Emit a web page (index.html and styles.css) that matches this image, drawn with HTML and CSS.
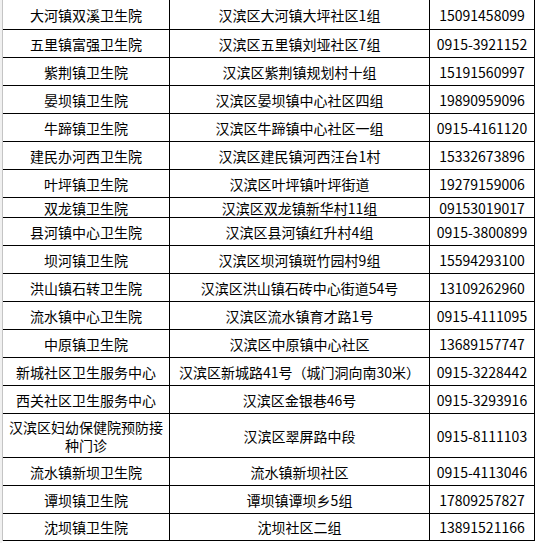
FILE: index.html
```html
<!DOCTYPE html>
<html lang="zh">
<head>
<meta charset="utf-8">
<title>卫生院联系方式</title>
<link rel="stylesheet" href="styles.css">
</head>
<body>
<div class="sheet">
  <div class="grid">
    <div class="row first"><div class="c name">大河镇双溪卫生院</div><div class="c addr">汉滨区大河镇大坪社区1组</div><div class="c tel">15091458099</div></div>
    <div class="row"><div class="c name">五里镇富强卫生院</div><div class="c addr">汉滨区五里镇刘垭社区7组</div><div class="c tel">0915-3921152</div></div>
    <div class="row"><div class="c name">紫荆镇卫生院</div><div class="c addr">汉滨区紫荆镇规划村十组</div><div class="c tel">15191560997</div></div>
    <div class="row"><div class="c name">晏坝镇卫生院</div><div class="c addr">汉滨区晏坝镇中心社区四组</div><div class="c tel">19890959096</div></div>
    <div class="row"><div class="c name">牛蹄镇卫生院</div><div class="c addr">汉滨区牛蹄镇中心社区一组</div><div class="c tel">0915-4161120</div></div>
    <div class="row"><div class="c name">建民办河西卫生院</div><div class="c addr">汉滨区建民镇河西汪台1村</div><div class="c tel">15332673896</div></div>
    <div class="row"><div class="c name">叶坪镇卫生院</div><div class="c addr">汉滨区叶坪镇叶坪街道</div><div class="c tel">19279159006</div></div>
    <div class="row short"><div class="c name">双龙镇卫生院</div><div class="c addr">汉滨区双龙镇新华村11组</div><div class="c tel">09153019017</div></div>
    <div class="row"><div class="c name">县河镇中心卫生院</div><div class="c addr">汉滨区县河镇红升村4组</div><div class="c tel">0915-3800899</div></div>
    <div class="row"><div class="c name">坝河镇卫生院</div><div class="c addr">汉滨区坝河镇斑竹园村9组</div><div class="c tel">15594293100</div></div>
    <div class="row"><div class="c name">洪山镇石转卫生院</div><div class="c addr">汉滨区洪山镇石砖中心街道54号</div><div class="c tel">13109262960</div></div>
    <div class="row"><div class="c name">流水镇中心卫生院</div><div class="c addr">汉滨区流水镇育才路1号</div><div class="c tel">0915-4111095</div></div>
    <div class="row"><div class="c name">中原镇卫生院</div><div class="c addr">汉滨区中原镇中心社区</div><div class="c tel">13689157747</div></div>
    <div class="row"><div class="c name">新城社区卫生服务中心</div><div class="c addr">汉滨区新城路41号（城门洞向南30米）</div><div class="c tel">0915-3228442</div></div>
    <div class="row"><div class="c name">西关社区卫生服务中心</div><div class="c addr">汉滨区金银巷46号</div><div class="c tel">0915-3293916</div></div>
    <div class="row tall"><div class="c name">汉滨区妇幼保健院预防接种门诊</div><div class="c addr">汉滨区翠屏路中段</div><div class="c tel">0915-8111103</div></div>
    <div class="row"><div class="c name">流水镇新坝卫生院</div><div class="c addr">流水镇新坝社区</div><div class="c tel">0915-4113046</div></div>
    <div class="row"><div class="c name">谭坝镇卫生院</div><div class="c addr">谭坝镇谭坝乡5组</div><div class="c tel">17809257827</div></div>
    <div class="row last"><div class="c name">沈坝镇卫生院</div><div class="c addr">沈坝社区二组</div><div class="c tel">13891521166</div></div>
  </div>
</div>
</body>
</html>
```

FILE: styles.css
```css
html, body {
  margin: 0;
  padding: 0;
  background: #ffffff;
}
body {
  font-family: "Noto Sans CJK SC", "Microsoft YaHei", sans-serif;
  font-size: 14px;
  color: #000;
  width: 538px;
  height: 543px;
  overflow: hidden;
}
.sheet {
  display: flex;
  height: 543px;
  border-left: 2px solid #f0f0f0;
}
.grid {
  display: flex;
  flex-direction: column;
  border-left: 1px solid #c4c4c4;
  width: 532px;
  align-self: flex-start;
}
.row {
  display: grid;
  grid-template-columns: 167px 260px 105px;
  height: 28px;
}
.row.first { height: 30px; }
.row.short { height: 20px; }
.row.tall { height: 44px; }
.row.last { height: 27px; }
.c {
  display: flex;
  align-items: center;
  justify-content: center;
  text-align: center;
  border-right: 1px solid #000;
  border-bottom: 1px solid #000;
  line-height: 18px;
  white-space: nowrap;
  overflow: hidden;
}
.row.tall .name {
  white-space: normal;
  padding: 0 4px;
}
.tel {
  letter-spacing: 0;
}
```
